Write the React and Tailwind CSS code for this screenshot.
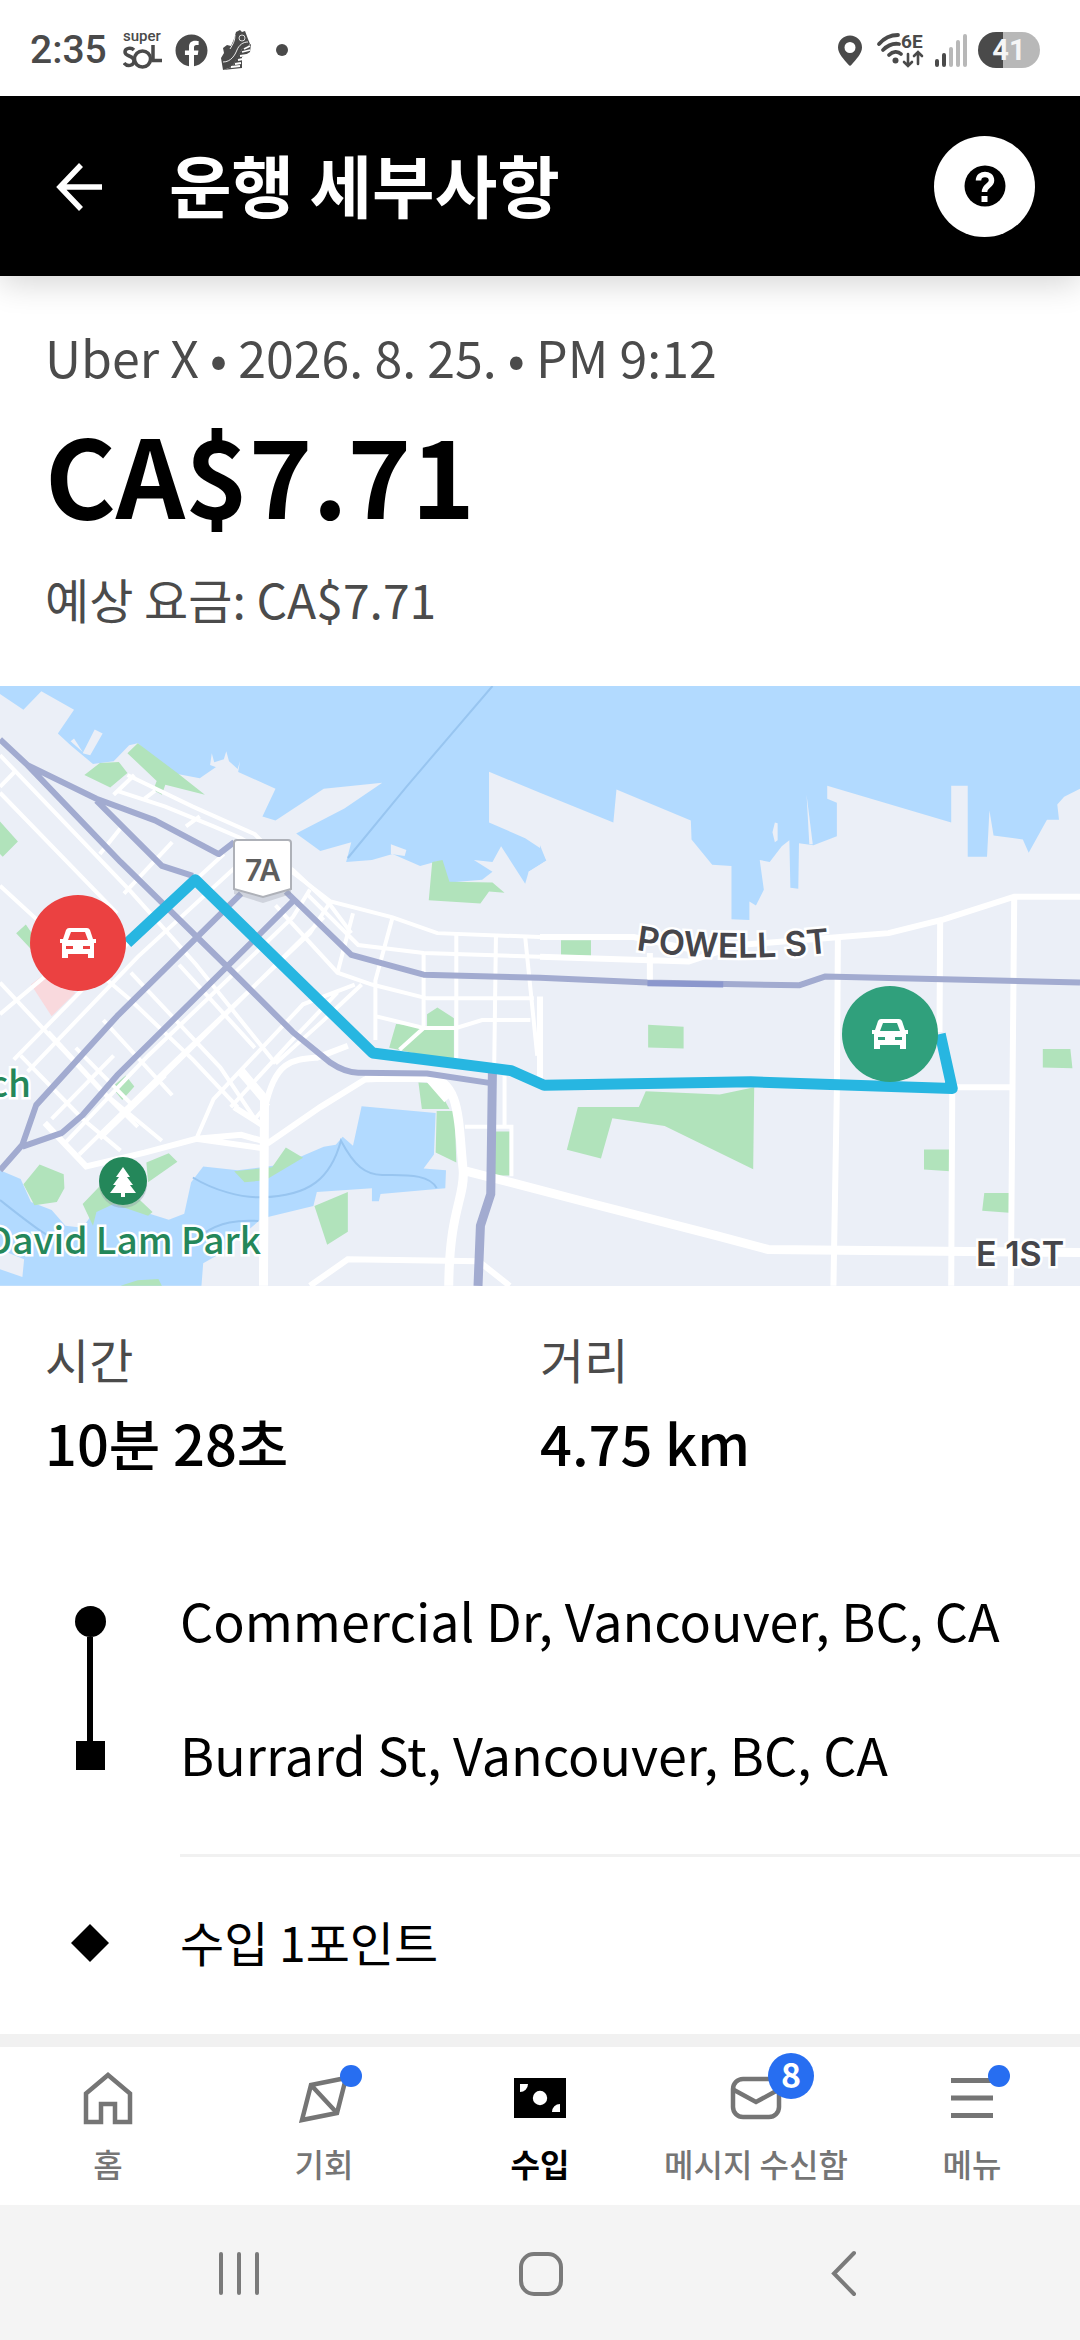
import { FaFacebook } from 'react-icons/fa';

const STATS = [
  { label: '시간', value: '10분 28초' },
  { label: '거리', value: '4.75 km' },
];

const STOPS = ['Commercial Dr, Vancouver, BC, CA', 'Burrard St, Vancouver, BC, CA'];

const TABS = [
  { id: 'home', label: '홈', icon: HomeIcon },
  { id: 'opportunity', label: '기회', icon: CompassIcon, dot: true },
  { id: 'earnings', label: '수입', icon: CashIcon, active: true },
  { id: 'inbox', label: '메시지 수신함', icon: MailIcon, count: 8 },
  { id: 'menu', label: '메뉴', icon: MenuIcon, dot: true },
];

function HomeIcon() {
  return (
    <svg viewBox="0 0 60 60" className="size-[60px]" fill="none" stroke="currentColor" strokeWidth="4.500">
      <path d="M8 55V26.500L30 8l22 18.500V55H37V37H23v18z" />
    </svg>
  );
}

function CompassIcon() {
  return (
    <svg viewBox="0 0 60 60" className="size-[60px]" fill="none" stroke="currentColor" strokeWidth="4.500">
      <path d="M17 18l35-7-9 35-35 7zM17 18l26 28" />
    </svg>
  );
}

function CashIcon() {
  return (
    <svg viewBox="0 0 60 60" className="size-[60px]">
      <path fill="currentColor" d="M4 11h52v40H4z" />
      <circle cx="30" cy="31" r="7.200" fill="white" />
      <path fill="white" d="M10 17h8a8 8 0 0 1-8 8zM50 45h-8a8 8 0 0 1 8-8z" />
    </svg>
  );
}

function MailIcon() {
  return (
    <svg viewBox="0 0 60 60" className="size-[60px]" fill="none" stroke="currentColor" strokeWidth="4.500">
      <rect x="7" y="12" width="46" height="38" rx="10" />
      <path d="M8 23l22 12 22-12" />
    </svg>
  );
}

function MenuIcon() {
  return (
    <svg viewBox="0 0 60 60" className="size-[60px]" fill="none" stroke="currentColor" strokeWidth="5">
      <path d="M9 13.500h42M9 31h42M9 48.500h42" />
    </svg>
  );
}

function SolIcon() {
  return (
    <svg viewBox="0 0 40 48" className="h-12 w-10" fill="none">
      <text x="0" y="15" fontSize="15" fontWeight="500" fill="#4a4a4a">super</text>
      <g stroke="#4a4a4a" strokeWidth="3.500">
        <path d="M11 24C8 21 2 22 2 26c0 5 9 3 9 9 0 5-7 6-10 2" />
        <circle cx="19.500" cy="33" r="8" />
        <path d="M30 19v15.500h9" />
      </g>
    </svg>
  );
}

function ShoeIcon() {
  return (
    <svg viewBox="0 0 32 40" className="h-[40px] w-[32px]">
      <path
        fill="#4a4a4a"
        d="M16 2l4-2 2 2 3-1 3 8 2 5-4 4-4 1-5 9-5 9-9 3-2-12 3-5-1-5 4-3 4 1 3-7z"
      />
      <path fill="#4a4a4a" d="M22 19l9-5-1 8-8 5v11L3 40l9-3 5-10z" />
      <path d="M24 19l6-3M22 22l8-2M20 26l7-1M18 30l5-1M15 34l6-1M11 37l9-1" stroke="white" strokeWidth="1.800" />
      <path d="M28 12c-5 0-9 3-11 8s-6 12-14 12M15 5c0 6-2 9-5 14" stroke="white" strokeWidth="0.900" fill="none" />
      <circle cx="22" cy="8" r="3" stroke="white" strokeWidth="0.800" fill="none" />
    </svg>
  );
}

function WifiIcon() {
  return (
    <svg viewBox="0 0 50 44" className="h-11 w-[50px]" fill="none" stroke="#4a4a4a" strokeLinecap="round">
      <path d="M3 16C9 9 15 7 22 7M7 22c5-5 10-7 16-6M13 27c4-4 9-4 12-1" strokeWidth="3.800" />
      <circle cx="19.500" cy="32.500" r="3" fill="#4a4a4a" stroke="none" />
      <text x="25" y="20" fontSize="19" fontWeight="700" fill="#4a4a4a" stroke="none">6E</text>
      <path d="M32 26v11M28 34l4 4 4-4M42 36V25M38 28l4-4 4 4" strokeWidth="2.600" />
    </svg>
  );
}

function StatusBar() {
  return (
    <div className="relative z-20 flex h-24 items-center justify-between bg-white pt-1 pr-10 pl-[30px] font-[Roboto,'Noto_Sans_CJK_KR',sans-serif]">
      <div className="flex items-center">
        <span className="text-[39px] leading-none font-medium text-[#4a4a4a]">2:35</span>
        <div className="ml-4 flex items-center gap-3">
          <SolIcon />
          <FaFacebook className="size-[33px] text-[#4a4a4a]" />
          <ShoeIcon />
          <span className="ml-3 size-3 rounded-full bg-[#4a4a4a]" />
        </div>
      </div>
      <div className="flex items-center">
        <svg viewBox="0 0 24 30" className="h-[31px] w-6" fill="#4a4a4a">
          <path fillRule="evenodd" d="M12 0a12 12 0 0 1 12 12c0 6-6 12-10.500 17.300a2 2 0 0 1-3 0C6 24 0 18 0 12A12 12 0 0 1 12 0zm0 6.500a5.500 5.500 0 1 0 0 11 5.500 5.500 0 0 0 0-11z" />
        </svg>
        <div className="ml-3.5">
          <WifiIcon />
        </div>
        <svg viewBox="0 0 34 36" className="ml-2 h-[36px] w-[34px]" strokeWidth="4" strokeLinecap="round">
          <path d="M3 29v4M10 23v10" stroke="#4a4a4a" />
          <path d="M17 17v16M24 10v23M31 4v29" stroke="#b8b8b8" />
        </svg>
        <div className="ml-2.5 flex h-9 w-[62px] items-center justify-center rounded-full bg-linear-to-r from-[#4a4a4a] from-40% to-[#b8b8b8] to-40%">
          <span className="text-[29px] leading-none font-bold text-[#f5f5f5]">41</span>
        </div>
      </div>
    </div>
  );
}

function Header() {
  return (
    <header className="relative z-10 flex h-[180px] items-center bg-black pr-[45px] pl-[50px] text-white shadow-[0_8px_30px_rgba(0,0,0,0.16)]">
      <button type="button" aria-label="뒤로" className="size-[60px]">
        <svg viewBox="0 0 60 60" className="size-[60px]" fill="none" stroke="currentColor" strokeWidth="5.500">
          <path d="M31 9L10 31l21 22M10 31h42" />
        </svg>
      </button>
      <h1 className="ml-[59px] flex-1 pb-1 text-[68px] leading-[80px] font-bold">운행 세부사항</h1>
      <button type="button" aria-label="도움말" className="flex size-[101px] items-center justify-center rounded-full bg-white">
        <svg viewBox="0 0 42 42" className="size-[42px]">
          <circle cx="21" cy="21" r="20.500" fill="black" />
          <path d="M14.500 15.500c0-8 13-8 13 0 0 5.500-7 4.500-7 11.500" fill="none" stroke="white" strokeWidth="5.500" />
          <path d="M17.500 31h6v6h-6z" fill="white" />
        </svg>
      </button>
    </header>
  );
}

function CarMarker({ x, y, color }) {
  return (
    <g transform={`translate(${x} ${y})`}>
      <circle r="48" fill={color} />
      <path
        fill="white"
        fillRule="evenodd"
        d="M-9-15H9q2 0 3 2L15-4h3v4h-2V15h-6v-4H-10v4h-6V0h-2v-4h3L-12-13q1-2 3-2zM-7-11L-10-3H10L7-11zM-12 3v3h7V3zM5 3v3h7V3z"
      />
    </g>
  );
}

function RouteMap() {
  return (
    <svg viewBox="0 0 1080 600" className="block h-auto w-full bg-[#ebeff7]" role="img" aria-label="운행 경로">
      {/* terrain is on a finer grid than the labels */}
      <g transform="scale(0.34439 0.3954) translate(0 -15)">
        <g fill="#b2daff">
          <path d="M0 15V35L68 75 120 28 215 75 168 135 205 165 270 212 330 205 375 165 400 160 500 235 580 248 640 212 800 275 762 345 800 355 940 275 1110 260 1000 325 860 388 930 432 1020 410 1005 460 1080 455 1140 440 1220 470 1270 458 1305 512 1400 505 1430 485 1376 455 1430 460 1455 420 1525 515 1535 485 1586 457 1568 425 1525 400 1420 360 1420 232 1568 285 1781 360 1790 277 2006 355 2008 403 2068 467 2124 470 2124 605 2176 607 2176 560 2195 570 2218 530 2206 455 2235 460 2270 420 2292 405 2295 525 2318 528 2320 413 2362 418 2430 395 2430 310 2402 300 2402 267 2762 360 2762 267 2810 267 2810 447 2866 447 2873 330 2885 393 2970 403 2987 437 3040 353 3075 353 3070 315 3090 295 3136 275V15z" />
          <path d="M1535 485L1586 457 1640 570 1568 640z" fill="#ebeff7" />
          <path d="M1568 418L1586 457H1568z" />
          <path d="M0 1240L60 1262 90 1320 150 1340 190 1380 240 1385 300 1310 400 1340 490 1365 535 1350 555 1270 590 1230 690 1240 820 1225 940 1180 975 1175 995 1155 1025 1178 1050 1078 1265 1095 1260 1200 1230 1235 1295 1240 1293 1285 1105 1300 1100 1318 1080 1318 1080 1285 920 1295 910 1330 760 1362 640 1450 590 1475 585 1532H0V1490L65 1510 70 1465 0 1440z" />
        </g>
        <g fill="#ebeff7">
          <path d="M240 185L275 125 298 135 262 190zM205 155L215 148 240 182zM1135 415L1180 430 1175 445 1135 440zM2243 385L2250 360 2258 362 2258 405 2250 410zM2342 290L2360 415 2350 415z" />
          <path d="M610 215L615 185 622 208 650 200 657 180 665 205 690 225 697 205 690 240z" />
        </g>
        <g fill="#b1e3bb">
          <path d="M245 240L290 210 345 207 370 235 320 272zM370 185L400 160 515 235 595 290 480 265 470 290 445 278 455 255zM0 358L52 408 8 447 0 440z" />
          <path d="M47 640L75 618 100 650 95 685zM325 1030L365 1000 390 1028 355 1062zM68 1275L115 1225 185 1250 187 1285 165 1320 100 1328zM425 1220L490 1197 515 1218 430 1270zM240 1325L295 1275 400 1310 443 1345 430 1355 330 1325 280 1345 270 1380z" />
          <path d="M680 1242L790 1232 830 1182 880 1208 770 1265 710 1270zM913 1330L1010 1295V1395L950 1428zM1150 870L1240 875 1240 845 1270 828 1318 855V965L1130 930zM1215 1018L1265 1020 1305 1085H1225zM1268 1090H1320L1325 1220 1265 1195zM1437 1142H1480V1253H1437zM1255 460L1285 455 1305 510 1430 512 1465 538 1420 535 1395 565 1245 557z" />
          <path d="M1629 658H1716V697H1629zM1882 872L1985 877V932L1882 929zM1678 1080H1855L1875 1040 2090 1048 2190 1030 2187 1237 1930 1128 1778 1108 1745 1210 1646 1188zM3028 933H3108L3114 982 3028 980zM2683 1187H2758V1242L2683 1238zM2858 1297H2930V1347L2852 1342zM350 1532L400 1518 460 1515 470 1532z" />
        </g>
        <path d="M90 770L120 750 220 790 150 850z" fill="#f9d9dd" />

        {/* ferry lines */}
        <path
          vectorEffect="non-scaling-stroke"
          d="M1430 15L1180 270 1010 450M560 1258C620 1290 700 1310 760 1308 900 1305 960 1260 990 1165 1030 1230 1060 1250 1110 1252 1200 1250 1250 1255 1268 1285M0 1315C80 1370 150 1420 220 1440M590 1400C640 1370 690 1365 750 1368"
          fill="none"
          stroke="#98c5f0"
          strokeWidth="2"
        />

        {/* minor streets */}
        <g fill="none" stroke="#fff" strokeWidth="4">
          <path vectorEffect="non-scaling-stroke" d="M0 190L380 535 570 720 800 970M0 285L340 590M0 520L150 640 380 810 560 960 690 1080M380 740L640 980 740 1110M0 765L290 1035 400 1130M140 890L310 1050 470 1165M60 950L240 1110 350 1190" />
          <path vectorEffect="non-scaling-stroke" d="M340 280L480 320 620 370 700 400 850 480 960 570 1020 640M370 240L560 320 740 390 830 470M0 270L45 230M290 440L350 375M330 290L390 240M420 300L450 280M360 540L500 410M540 370L580 345" />
          <path vectorEffect="non-scaling-stroke" d="M40 960L400 640 650 440M80 990L400 700 700 460M0 845L130 750M150 1110L330 950M190 1170L430 950 850 600 900 530M230 1200L500 970 900 640 960 560M290 1160L480 1000M430 1040L940 600M570 1160L620 1060 880 820 1030 770M670 1080L860 900 980 790M740 1110L780 1070M800 970L940 860 1050 770" />
          <path vectorEffect="non-scaling-stroke" d="M520 720L740 930M800 570L980 740 1080 770 1240 805H1550M890 540L1040 670 1230 690 1568 700M840 480L960 560 1140 600 1270 640 1568 650M300 860L500 1050M220 930L390 1080" />
          <path vectorEffect="non-scaling-stroke" d="M1140 600L1090 760V910M1230 690V880L1160 935M1325 640V960M1440 650L1435 980M1525 650L1560 950M1090 850L1230 880H1325L1400 860H1540M1025 590L980 740M1465 1000V1130M1350 1130H1485V1255" />
        </g>

        {/* main streets */}
        <g fill="none" stroke="#fff" strokeWidth="6">
          <path vectorEffect="non-scaling-stroke" d="M1568 650H1840L2000 680 2220 665 2440 650 2580 640 2740 605 2945 548H3136M1568 700L2000 712 2110 680M1887 690V760M2433 650L2430 1040 2420 1532M2730 605L2728 890M2945 548L2940 1030 2935 1532M2765 1040L2762 1532M2770 1030H2940M1568 800V1030" />
          <path vectorEffect="non-scaling-stroke" d="M900 1532L1010 1465 1390 1470 1480 1532M570 1160L700 1150 780 1170 930 1080 1060 1010 1200 1005M680 1080L770 1130M130 1120L250 1230 420 1195 570 1160 770 1185M770 1080C800 960 850 960 920 955L1010 925" />
        </g>
        <g fill="none" stroke="#fff" strokeWidth="9">
          <path vectorEffect="non-scaling-stroke" d="M765 1532L768 1060 700 990M1060 1005H1240C1340 1010 1330 1120 1345 1240 1350 1310 1305 1340 1303 1532M1345 1240L1480 1270 1700 1320 2080 1405 2230 1440 3136 1448M1240 1000L1300 1060" />
        </g>

        {/* highways */}
        <g fill="none" stroke="#a2abd0" strokeWidth="6" strokeLinejoin="round">
          <path vectorEffect="non-scaling-stroke" d="M0 150L80 215 280 300 450 355 635 440 680 410M80 215L350 460 660 725 850 890 960 968Q1000 992 1040 993L1240 995 1430 1020M280 305L470 470 560 495M0 1240L65 1175 105 1075 340 850 700 540M65 1180L180 1145 240 1100 340 1000 850 560" />
          <path vectorEffect="non-scaling-stroke" d="M830 535L1020 695 1230 745 1568 753 1880 765 2320 772 2395 750 3136 765" />
        </g>
        <path vectorEffect="non-scaling-stroke" d="M1880 767L2100 770" stroke="#8b97cd" strokeWidth="6" />
        <path vectorEffect="non-scaling-stroke" d="M1430 980L1425 1300 1395 1380 1388 1532" fill="none" stroke="#a2abd0" strokeWidth="9" />

        {/* trip */}
        <path
          vectorEffect="non-scaling-stroke"
          d="M370 665L567 505 1082 943 1485 988 1580 1025 2180 1016 2765 1033 2730 895"
          fill="none"
          stroke="#27b6e1"
          strokeWidth="11"
          strokeLinejoin="round"
        />
      </g>

      <g fontWeight="500" fontSize="37" fill="#24875a" stroke="#ffffff" strokeWidth="5" paintOrder="stroke">
        <text x="31" y="411" textAnchor="end">ch</text>
        <text x="261" y="568" textAnchor="end">David Lam Park</text>
      </g>

      <path id="powell" d="M636 264Q735 280 860 263" fill="none" />
      <g className="font-[Inter,sans-serif]" fontWeight="600" fontSize="34" fill="#46464b" stroke="#ffffff" strokeWidth="5" paintOrder="stroke">
        <text>
          <textPath href="#powell">POWELL ST</textPath>
        </text>
        <text x="976" y="580">E 1ST</text>
      </g>

      {/* highway shield */}
      <path d="M237 154h51q3 0 3 3v46l-28 9-29-9v-46q0-3 3-3z" fill="#9aa0ab" opacity="0.35" transform="translate(0 5)" />
      <path d="M237 154h51q3 0 3 3v46l-28 8-29-8v-46q0-3 3-3z" fill="white" stroke="#aeb1b8" strokeWidth="2" />
      <text x="263" y="195" textAnchor="middle" className="font-[Inter,sans-serif]" fontSize="30" fontWeight="600" fill="#5d5d5d">7A</text>

      {/* park pin */}
      <circle cx="123" cy="498" r="24" fill="#8d9aa5" opacity="0.4" />
      <circle cx="123" cy="495" r="24" fill="#24875a" />
      <path d="M123 481l7 10h-3l6 8h-3l6 8h-11v4h-4v-4h-11l6-8h-3l6-8h-3z" fill="white" />

      <CarMarker x={78} y={257} color="#eb4141" />
      <CarMarker x={890} y={348} color="#30a07c" />
    </svg>
  );
}

function TabBar() {
  return (
    <nav className="grid h-[171px] grid-cols-5 border-t-[13px] border-[#f1f1f1] bg-white">
      {TABS.map(({ id, label, icon: Icon, active, dot, count }) => (
        <button
          key={id}
          type="button"
          className={`flex flex-col items-center pt-5 whitespace-nowrap ${active ? 'font-bold text-black' : 'font-medium text-[#757575]'}`}
        >
          <span className="relative">
            <Icon />
            {dot && <span className="absolute -top-0.5 -right-2 size-[22px] rounded-full bg-[#276ef1]" />}
            {count && (
              <span className="absolute -top-3.5 -right-7 flex size-[46px] items-center justify-center rounded-full bg-[#276ef1] pb-1 text-[34px] leading-none font-bold text-white">
                {count}
              </span>
            )}
          </span>
          <span className="mt-3 text-[32px] leading-[48px]">{label}</span>
        </button>
      ))}
    </nav>
  );
}

function SystemBar() {
  return (
    <div className="grid h-[135px] grid-cols-3 bg-[#f4f4f4] px-[88px] text-[#7a7a7a]">
      <button type="button" aria-label="최근 앱" className="flex items-center justify-center">
        <svg viewBox="0 0 48 48" className="size-12" fill="none" stroke="currentColor" strokeWidth="4" strokeLinecap="round">
          <path d="M6 5v39M24 5v39M42 5v39" />
        </svg>
      </button>
      <button type="button" aria-label="홈 화면" className="flex items-center justify-center">
        <svg viewBox="0 0 48 48" className="size-12" fill="none" stroke="currentColor" strokeWidth="4">
          <rect x="5" y="5" width="40" height="40" rx="13" />
        </svg>
      </button>
      <button type="button" aria-label="이전 화면" className="flex items-center justify-center">
        <svg viewBox="0 0 48 48" className="size-12" fill="none" stroke="currentColor" strokeWidth="4" strokeLinecap="round">
          <path d="M37 4L17 24.500 37 45" />
        </svg>
      </button>
    </div>
  );
}

export default function App() {
  return (
    <div className="flex min-h-screen flex-col bg-white font-['Noto_Sans_CJK_KR',sans-serif] text-black">
      <StatusBar />
      <Header />

      <main className="flex-1">
        {/* Fare */}
        <section className="px-[45px] pt-12 pb-14">
          <p className="text-[50px] leading-[64px] text-[#4b4b4b]">Uber X • 2026. 8. 25. • PM 9:12</p>
          <p className="mt-6 text-[108px] leading-[120px] font-bold">CA$7.71</p>
          <p className="mt-[34px] text-[48px] leading-[64px] text-[#4b4b4b]">예상 요금: CA$7.71</p>
        </section>

        <RouteMap />

        {/* Trip stats */}
        <dl className="grid grid-cols-2 pt-10 pb-[71px]">
          {STATS.map(({ label, value }) => (
            <div key={label} className="pl-[45px] nth-2:pl-0">
              <dt className="text-[48px] leading-[64px] text-[#4b4b4b]">{label}</dt>
              <dd className="mt-3 text-[56px] leading-[80px] font-medium">{value}</dd>
            </div>
          ))}
        </dl>

        {/* Pickup and drop-off */}
        <div className="flex">
          <div className="flex w-[180px] flex-col items-center pt-[53px] pb-[51px]">
            <span className="size-[31px] rounded-full bg-black" />
            <span className="w-1.5 flex-1 bg-black" />
            <span className="size-[29px] bg-black" />
          </div>
          <ul className="flex-1 text-[52px]">
            {STOPS.map(stop => (
              <li key={stop} className="flex h-[134px] items-center whitespace-nowrap">{stop}</li>
            ))}
          </ul>
        </div>

        <div className="mt-[33px] ml-[180px] border-t-[3px] border-[#f1f1f1]" />

        <div className="flex h-[168px] items-center">
          <div className="flex w-[180px] justify-center pt-1">
            <svg viewBox="0 0 38 38" className="size-[38px]">
              <path d="M19 0l19 19-19 19L0 19z" />
            </svg>
          </div>
          <span className="text-[48px] leading-[64px]">수입 1포인트</span>
        </div>
      </main>

      <TabBar />
      <SystemBar />
    </div>
  );
}
